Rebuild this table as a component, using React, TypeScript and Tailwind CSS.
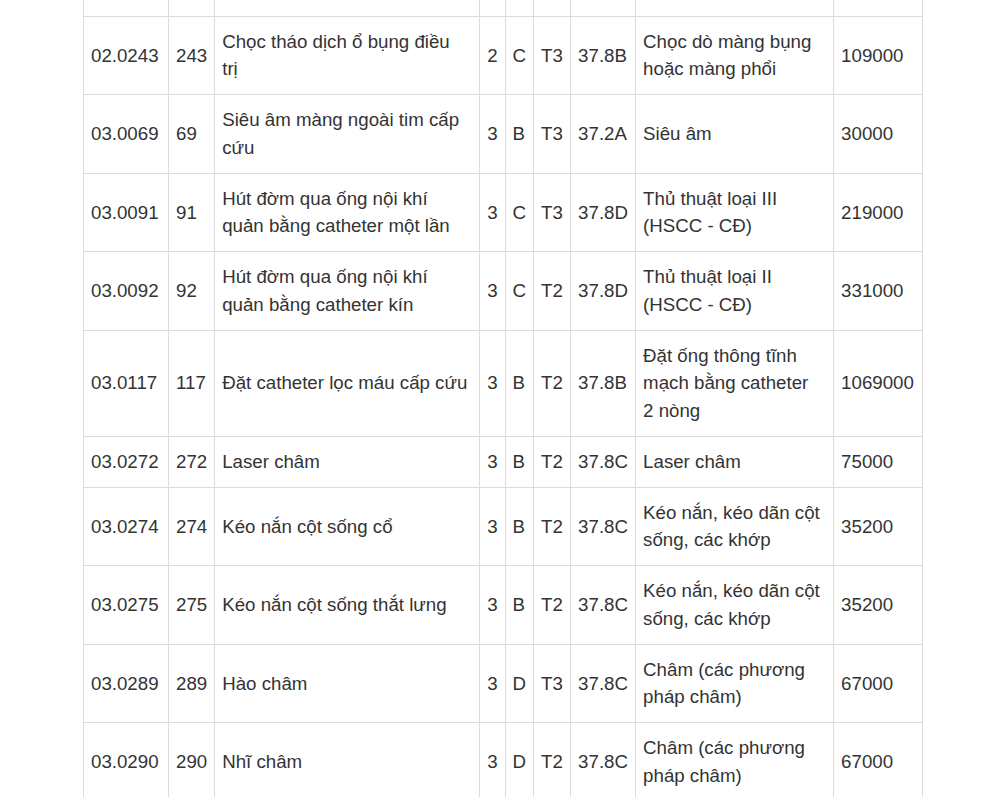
const rows = [
  { code: "02.0243", no: "243", name: ["Chọc tháo dịch ổ bụng điều", "trị"], g: "2", k: "C", t: "T3", m: "37.8B", ref: ["Chọc dò màng bụng", "hoặc màng phổi"], price: "109000" },
  { code: "03.0069", no: "69", name: ["Siêu âm màng ngoài tim cấp", "cứu"], g: "3", k: "B", t: "T3", m: "37.2A", ref: ["Siêu âm"], price: "30000" },
  { code: "03.0091", no: "91", name: ["Hút đờm qua ống nội khí", "quản bằng catheter một lần"], g: "3", k: "C", t: "T3", m: "37.8D", ref: ["Thủ thuật loại III", "(HSCC - CĐ)"], price: "219000" },
  { code: "03.0092", no: "92", name: ["Hút đờm qua ống nội khí", "quản bằng catheter kín"], g: "3", k: "C", t: "T2", m: "37.8D", ref: ["Thủ thuật loại II", "(HSCC - CĐ)"], price: "331000" },
  { code: "03.0117", no: "117", name: ["Đặt catheter lọc máu cấp cứu"], g: "3", k: "B", t: "T2", m: "37.8B", ref: ["Đặt ống thông tĩnh", "mạch bằng catheter", "2 nòng"], price: "1069000" },
  { code: "03.0272", no: "272", name: ["Laser châm"], g: "3", k: "B", t: "T2", m: "37.8C", ref: ["Laser châm"], price: "75000" },
  { code: "03.0274", no: "274", name: ["Kéo nắn cột sống cổ"], g: "3", k: "B", t: "T2", m: "37.8C", ref: ["Kéo nắn, kéo dãn cột", "sống, các khớp"], price: "35200" },
  { code: "03.0275", no: "275", name: ["Kéo nắn cột sống thắt lưng"], g: "3", k: "B", t: "T2", m: "37.8C", ref: ["Kéo nắn, kéo dãn cột", "sống, các khớp"], price: "35200" },
  { code: "03.0289", no: "289", name: ["Hào châm"], g: "3", k: "D", t: "T3", m: "37.8C", ref: ["Châm (các phương", "pháp châm)"], price: "67000" },
  { code: "03.0290", no: "290", name: ["Nhĩ châm"], g: "3", k: "D", t: "T2", m: "37.8C", ref: ["Châm (các phương", "pháp châm)"], price: "67000" },
];

const widths = ["w-[85px]", "w-[46px]", "w-[265px]", "w-[23px]", "w-[28px]", "w-[37px]", "w-[65px]", "w-[198px]", "w-[89px]"];

const Lines = ({ lines }: { lines: string[] }) => (
  <>
    {lines.map((l, i) => (
      <div key={i}>{l}</div>
    ))}
  </>
);

const cell = "border border-[#dcdcdc] px-[7px] py-[11.25px] align-middle whitespace-nowrap";

export default function App() {
  return (
    <div className="min-h-[800px] w-[1000px] bg-white">
      <div className="ml-[83px] h-[797px] overflow-hidden">
        <table
          className="table-fixed border-collapse text-[18.7px] leading-[27.5px] text-[#333]"
          style={{ fontFamily: '"Liberation Sans", Arial, sans-serif' }}
        >
          <colgroup>
            {widths.map((w, i) => (
              <col key={i} className={w} />
            ))}
          </colgroup>
          <tbody>
            <tr className="h-[16px]">
              {widths.map((_, i) => (
                <td key={i} className="border-x border-b border-[#dcdcdc] p-0" />
              ))}
            </tr>
            {rows.map((r) => (
              <tr key={r.code}>
                <td className={cell}>{r.code}</td>
                <td className={cell}>{r.no}</td>
                <td className={cell}>
                  <Lines lines={r.name} />
                </td>
                <td className={`${cell} px-[5px]`}>{r.g}</td>
                <td className={`${cell} px-[5px]`}>{r.k}</td>
                <td className={`${cell} px-[5px]`}>{r.t}</td>
                <td className={`${cell} px-[6px]`}>{r.m}</td>
                <td className={cell}>
                  <Lines lines={r.ref} />
                </td>
                <td className={cell}>{r.price}</td>
              </tr>
            ))}
          </tbody>
        </table>
      </div>
    </div>
  );
}
